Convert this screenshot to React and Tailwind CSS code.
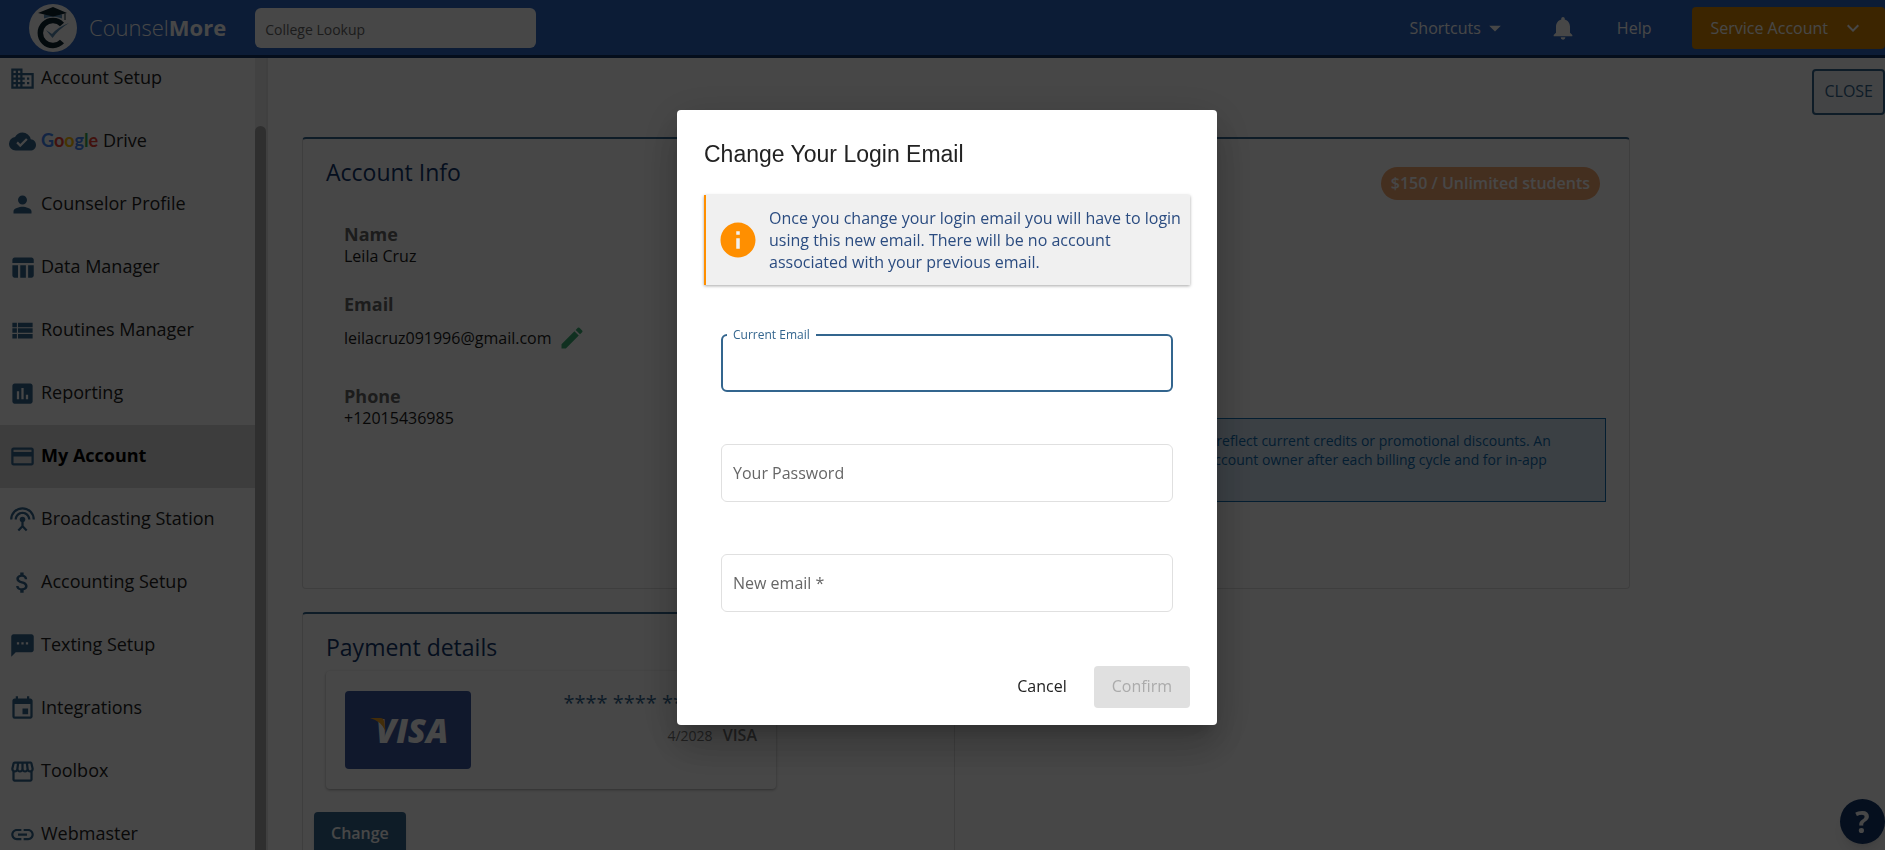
import React, { useState } from 'react';
import {
  MdArrowDropDown,
  MdAssessment,
  MdAttachMoney,
  MdBusiness,
  MdCloudDone,
  MdCreditCard,
  MdEdit,
  MdEvent,
  MdInfo,
  MdKeyboardArrowDown,
  MdLink,
  MdNotifications,
  MdOutlineStorefront,
  MdPerson,
  MdSettingsInputAntenna,
  MdSms,
  MdTableChart,
  MdViewList,
} from 'react-icons/md';

function GoogleDriveLabel() {
  return (
    <>
      <span className="font-[Lato,sans-serif] text-lg font-bold">
        <span className="text-[#4285f4]">G</span>
        <span className="text-[#ea4335]">o</span>
        <span className="text-[#fbbc05]">o</span>
        <span className="text-[#4285f4]">g</span>
        <span className="text-[#34a853]">l</span>
        <span className="text-[#ea4335]">e</span>
      </span>
      {' Drive'}
    </>
  );
}

const menuItems = [
  { id: 'setup', label: 'Account Setup', icon: MdBusiness },
  { id: 'drive', label: <GoogleDriveLabel />, icon: MdCloudDone },
  { id: 'profile', label: 'Counselor Profile', icon: MdPerson },
  { id: 'data', label: 'Data Manager', icon: MdTableChart },
  { id: 'routines', label: 'Routines Manager', icon: MdViewList },
  { id: 'reporting', label: 'Reporting', icon: MdAssessment },
  { id: 'account', label: 'My Account', icon: MdCreditCard },
  { id: 'broadcast', label: 'Broadcasting Station', icon: MdSettingsInputAntenna },
  { id: 'accounting', label: 'Accounting Setup', icon: MdAttachMoney },
  { id: 'texting', label: 'Texting Setup', icon: MdSms },
  { id: 'integrations', label: 'Integrations', icon: MdEvent },
  { id: 'toolbox', label: 'Toolbox', icon: MdOutlineStorefront },
  { id: 'webmaster', label: 'Webmaster', icon: MdLink },
];

function Logo() {
  return (
    <svg viewBox="0 0 48 48" className="size-12" aria-hidden="true">
      <circle cx="24" cy="24" r="24" fill="#fff" />
      <path d="M33 20.5A12.5 12.5 0 1 0 33 37.5" fill="none" stroke="#0c2430" strokeWidth="5.5" />
      <path d="M15 10.500Q24 7.500 33 10.500V14.500Q24 11 15 14.500Z" fill="#5b8db5" />
      <path d="M9 9L24 3L38 9L24 12.500Z" fill="#0c2430" />
      <path d="M36 9.500V16" stroke="#0c2430" strokeWidth="1" />
      <path d="M17 26L23 30Q29 23 40 19Q30 25 23.500 34Z" fill="#5b8db5" />
    </svg>
  );
}

function Header() {
  return (
    <header className="flex h-[58px] shrink-0 items-center border-b-3 border-[#0f2f60] bg-[#2b64c1] pl-[29px] text-base text-white">
      <Logo />
      <a href="#home" className="ml-3 text-[22px] font-light">
        Counsel<span className="font-bold">More</span>
      </a>
      <input
        type="text"
        aria-label="College Lookup"
        placeholder="College Lookup"
        className="ml-[29px] h-10 w-[281px] rounded-md bg-white px-2.5 pt-1 text-sm text-gray-800 placeholder:text-[#666]"
      />
      <nav className="ml-auto flex items-center">
        <button className="flex items-center">
          Shortcuts
          <MdArrowDropDown className="size-7" />
        </button>
        <button aria-label="Notifications" className="ml-10">
          <MdNotifications className="size-7" />
        </button>
        <a href="#help" className="ml-10">
          Help
        </a>
        <button className="ml-[41px] flex h-[42px] items-center gap-[13px] rounded bg-[#d68500] pr-5 pl-[18px]">
          Service Account
          <MdKeyboardArrowDown className="size-6" />
        </button>
      </nav>
    </header>
  );
}

function Sidebar() {
  return (
    <aside className="flex w-[268px] shrink-0 overflow-hidden border-r-2 border-[#e4e4e4]">
      <ul className="-mt-[11px] grow">
        {menuItems.map(({ id, label, icon: Icon }) => (
          <li key={id}>
            <a
              href={`#${id}`}
              className={`flex h-[63px] items-center gap-[5px] pl-[9px] text-lg text-[#222] ${
                id === 'account' ? 'bg-[#d9d9d9] font-bold text-black' : ''
              }`}
            >
              <Icon className="size-[27px] shrink-0 text-[#33658e]" />
              <span className="pb-1">{label}</span>
            </a>
          </li>
        ))}
      </ul>
      <div className="flex w-[11px] flex-col bg-[#ececec] pt-[68px]">
        <div className="grow rounded-t-full bg-[#a8a8a8]" />
      </div>
    </aside>
  );
}

function Card({ title, badge, className = '', children }) {
  return (
    <section className={`rounded border border-t-2 border-[#dedede] border-t-[#33658e] ${className}`}>
      <div className="flex items-start justify-between pt-[17px] pr-[29px] pl-[23px]">
        <h2 className="text-[23px] leading-8 text-[#12386e]">{title}</h2>
        {badge}
      </div>
      {children}
    </section>
  );
}

function AccountInfo() {
  return (
    <Card
      title="Account Info"
      className="min-h-[452px]"
      badge={
        <span className="mt-[11px] rounded-full bg-[#f5a870] px-2.5 py-1 font-semibold leading-[25px] text-white">
          $150 / Unlimited students
        </span>
      }
    >
      <div className="grid grid-cols-2">
        <dl className="pt-[22px] pl-[41px] text-[#1c1c1c]">
          <dt className="text-lg font-bold leading-6 text-[#666]">Name</dt>
          <dd className="leading-5">Leila Cruz</dd>
          <dt className="mt-[26px] text-lg font-bold leading-6 text-[#666]">Email</dt>
          <dd className="mt-0.5 flex items-center gap-1.5 leading-10">
            leilacruz091996@gmail.com
            <button aria-label="Edit email">
              <MdEdit className="size-7 text-[#3cae74]" />
            </button>
          </dd>
          <dt className="mt-[26px] text-lg font-bold leading-6 text-[#666]">Phone</dt>
          <dd className="leading-5">+12015436985</dd>
        </dl>
        <div className="pr-[23px] pt-[218px]">
          <p className="min-h-[84px] border border-[#0f6cb0] bg-[#d5e6f5] py-3 pl-6 text-sm leading-[19px] text-[#0f6cb0]">
            The next payment shown may not reflect current credits or promotional discounts. An
            <br />
            invoice will always be sent to the account owner after each billing cycle and for in-app
          </p>
        </div>
      </div>
    </Card>
  );
}

function VisaCard() {
  return (
    <div className="relative flex h-[78px] w-[126px] items-center justify-center rounded bg-[#3a569f]">
      <span className="pl-2 text-[33px] font-extrabold italic leading-none text-white">VISA</span>
      <svg viewBox="0 0 16 14" className="absolute top-[27px] left-[25px] h-3.5 w-4" aria-hidden="true">
        <path d="M0 0H10.500Q13.500 0 14 3L15.500 13Q11 3 0 0Z" fill="#f0a020" />
      </svg>
    </div>
  );
}

function PaymentDetails() {
  return (
    <Card title="Payment details" className="min-h-[452px]">
      <div className="mt-2 ml-[23px] flex h-[118px] w-[450px] justify-between rounded px-[19px] pt-5 shadow-[0_1px_3px_rgba(0,0,0,0.35)]">
        <VisaCard />
        <div className="text-right">
          <p className="text-xl leading-6 text-[#33658e]">**** **** **** 4242</p>
          <p className="mt-2 text-[#777]">
            <span className="text-sm">4/2028</span> <span className="ml-1.5 font-semibold">VISA</span>
          </p>
        </div>
      </div>
      <button className="mt-[23px] ml-[11px] h-[42px] rounded bg-[#33658e] px-[17px] font-semibold text-white shadow-md">
        Change
      </button>
    </Card>
  );
}

function OutlinedField({ id, label, type = 'text', value, onChange, focused }) {
  if (focused) {
    return (
      <fieldset className="-mt-[7px] h-[65px] rounded-md border-2 border-[#33658e] pl-1">
        <legend className="px-1.5 text-xs leading-4 text-[#33658e]">
          <label htmlFor={id}>{label}</label>
        </legend>
        <input
          id={id}
          type={type}
          value={value}
          onChange={onChange}
          className="h-11 w-full px-1.5 outline-none"
        />
      </fieldset>
    );
  }

  return (
    <input
      id={id}
      type={type}
      aria-label={label}
      placeholder={label}
      value={value}
      onChange={onChange}
      className="h-[58px] w-full rounded-md border border-[#e0e0e0] px-[11px] pb-px outline-none placeholder:text-[#666]"
    />
  );
}

function ChangeEmailDialog() {
  const [form, setForm] = useState({ current: '', password: '', next: '' });

  const update = (key) => (e) => setForm({ ...form, [key]: e.target.value });

  return (
    <div className="fixed inset-0 flex items-center justify-center bg-black/72 pb-[15px] pl-[9px]">
      <form
        role="dialog"
        aria-labelledby="dialog-title"
        className="w-[540px] rounded bg-white px-[27px] pt-6 pb-[17px] shadow-[0_11px_15px_-7px_rgba(0,0,0,0.2),0_24px_38px_3px_rgba(0,0,0,0.14),0_9px_46px_8px_rgba(0,0,0,0.12)]"
      >
        <h1 id="dialog-title" className="font-['Liberation_Sans',Arial,sans-serif] text-[23px] leading-10 text-[#222]">
          Change Your Login Email
        </h1>
        <div className="mt-[21px] flex h-[90px] items-center gap-2.5 border-l-2 border-[#ff8f00] bg-[#f0f0f0] pl-[11px] shadow-[0_1px_3px_rgba(0,0,0,0.35)]">
          <MdInfo className="size-[42px] shrink-0 text-[#ff8f00]" />
          <p className="leading-[22px] text-[#2b4c80]">
            Once you change your login email you will have to login using this new email. There will be no account
            associated with your previous email.
          </p>
        </div>
        <div className="mt-[49px] space-y-[52px] px-[17px]">
          <OutlinedField id="current" label="Current Email" value={form.current} onChange={update('current')} focused />
          <OutlinedField
            id="password"
            label="Your Password"
            type="password"
            value={form.password}
            onChange={update('password')}
          />
          <OutlinedField id="next" label="New email *" type="email" value={form.next} onChange={update('next')} />
        </div>
        <div className="mt-[54px] flex justify-end gap-[9px]">
          <button type="button" className="h-[42px] px-[18px] pb-0.5 font-medium text-[#222]">
            Cancel
          </button>
          <button
            type="submit"
            disabled
            className="h-[42px] rounded bg-[#e0e0e0] px-[18px] pb-0.5 font-medium text-[#ababab]"
          >
            Confirm
          </button>
        </div>
      </form>
    </div>
  );
}

export default function App() {
  return (
    <div className="flex h-screen flex-col overflow-hidden bg-white font-['Open_Sans',sans-serif]">
      <Header />
      <div className="flex min-h-0 grow">
        <Sidebar />
        <main className="grow overflow-hidden pt-[11px]">
          <div className="flex justify-end">
            <button className="h-[46px] rounded border-2 border-[#33658e] bg-[#f0f4f8] px-2.5 pb-0.5 text-[#33658e]">
              CLOSE
            </button>
          </div>
          <div className="mt-[22px] mr-[255px] ml-[34px] space-y-[23px]">
            <AccountInfo />
            <div className="grid grid-cols-2 gap-[22px]">
              <PaymentDetails />
            </div>
          </div>
        </main>
      </div>
      <button
        aria-label="Support"
        className="fixed right-0 bottom-1.5 size-[45px] rounded-full bg-[#12386e] text-3xl font-bold text-white shadow-lg"
      >
        ?
      </button>
      <ChangeEmailDialog />
    </div>
  );
}
